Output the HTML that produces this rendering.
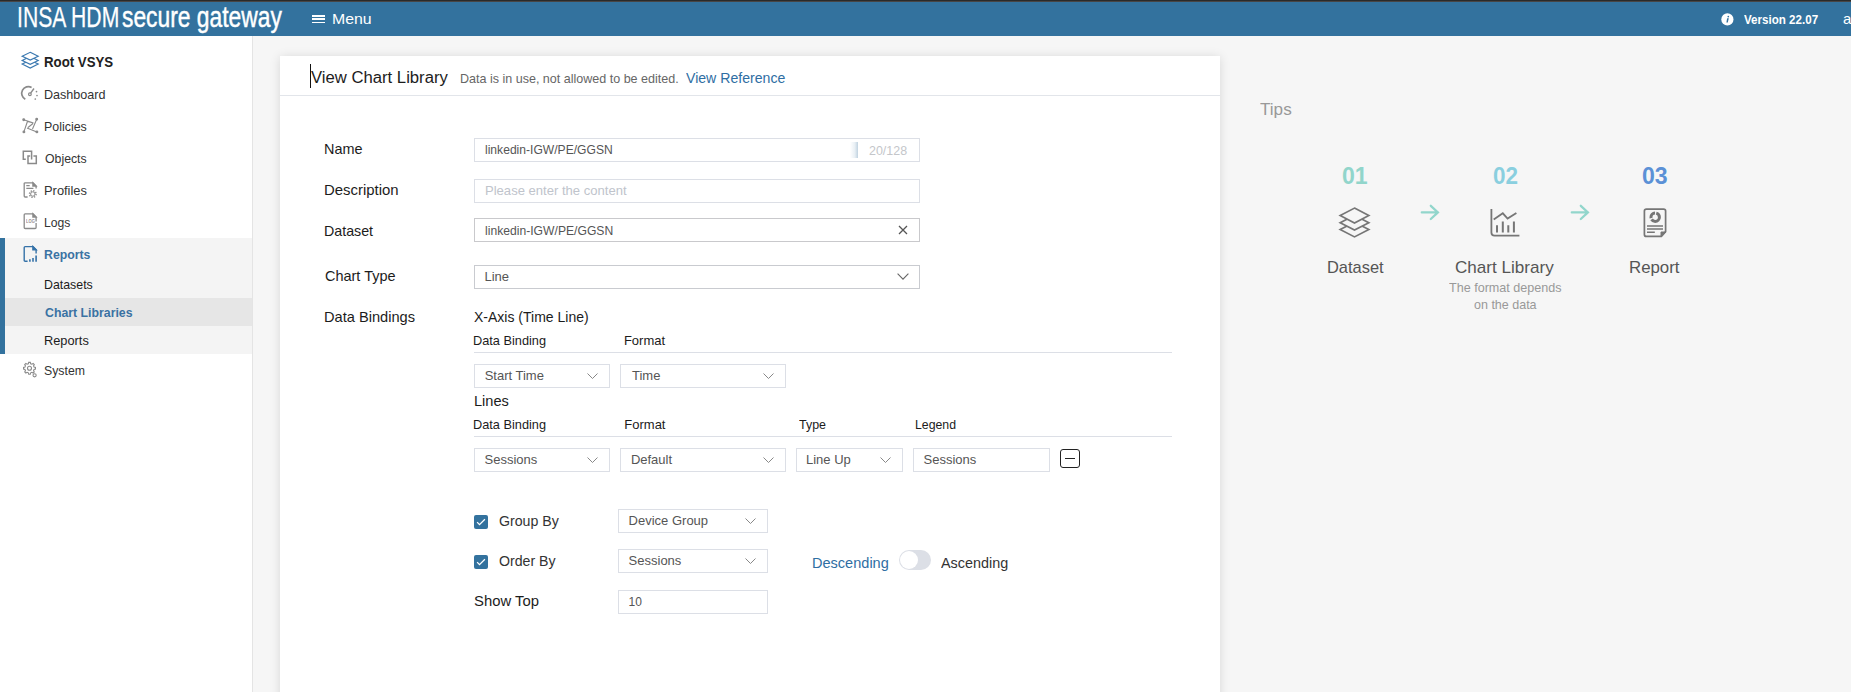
<!DOCTYPE html>
<html><head><meta charset="utf-8"><style>
*{margin:0;padding:0;box-sizing:border-box}
html,body{width:1851px;height:692px;overflow:hidden;background:#f6f6f6;font-family:"Liberation Sans",sans-serif;color:#222}
.a{position:absolute}
.t{position:absolute;white-space:nowrap;line-height:1;transform-origin:0 0}
.ib{position:absolute;border:1px solid #dcdfe6;background:#fff}
.hr{position:absolute;height:1px;background:#dcdfe6}
svg{position:absolute;overflow:visible}
</style></head><body>
<!-- top bar -->
<div class="a" style="left:0;top:0;width:1851px;height:36px;background:#33729e"></div>
<div class="a" style="left:0;top:0;width:1851px;height:1px;background:#2a2a2a"></div><div class="a" style="left:0;top:1px;width:1851px;height:1px;background:#474545"></div>
<!-- hamburger -->
<div class="a" style="left:312px;top:15px;width:13px;height:1.6px;background:#fff"></div>
<div class="a" style="left:312px;top:18.3px;width:13px;height:1.6px;background:#fff"></div>
<div class="a" style="left:312px;top:21.6px;width:13px;height:1.6px;background:#fff"></div>
<!-- info icon -->
<svg style="left:1720px;top:13px" width="15" height="14" viewBox="0 0 15 14"><circle cx="7.4" cy="6.4" r="6.1" fill="#fff"/><circle cx="8.3" cy="3.6" r="0.85" fill="#33729e"/><path d="M7.1 5.3 H8.8 L7.8 9.6 H6.4 Z" fill="#33729e"/></svg>

<!-- sidebar -->
<div class="a" style="left:0;top:36px;width:253px;height:656px;background:#fff;border-right:1px solid #e4e4e4"></div>
<div class="a" style="left:0;top:238px;width:252px;height:116px;background:#f4f4f4"></div>
<div class="a" style="left:0;top:298px;width:252px;height:28px;background:#e6e6e6"></div>
<div class="a" style="left:0;top:238px;width:5px;height:116px;background:#33729e"></div>

<!-- sidebar icons -->
<svg style="left:22px;top:51px" width="17" height="18" viewBox="0 0 17 18" stroke="#3a78b0" stroke-width="1.15" stroke-linejoin="miter">
<path d="M8.2 9.2 L16.2 13.1 L8.2 17 L0.2 13.1 Z" fill="#fff"/><path d="M8.2 5.5 L16.2 9.4 L8.2 13.3 L0.2 9.4 Z" fill="#fff"/><path d="M8.2 1.3 L16.2 5.2 L8.2 9.1 L0.2 5.2 Z" fill="#fff"/></svg>
<svg style="left:22px;top:86px" width="17" height="15" viewBox="0 0 17 15" fill="none" stroke="#8a8a8a" stroke-width="1.7">
<path d="M3.3 13.3 A6.6 6.6 0 0 1 9.6 1.4"/><path d="M8.6 7.1 L12 2.5" stroke-width="1.4"/><circle cx="7.9" cy="8.3" r="1.35" stroke-width="1.2"/><circle cx="14.5" cy="5.6" r="0.85" fill="#8a8a8a" stroke="none"/><circle cx="15" cy="9.5" r="0.85" fill="#8a8a8a" stroke="none"/><circle cx="13.3" cy="13" r="0.85" fill="#8a8a8a" stroke="none"/></svg>
<svg style="left:22px;top:117px" width="17" height="17" viewBox="0 0 17 17" fill="none" stroke="#8a8a8a" stroke-width="1.1">
<path d="M1.7 2.7 L11.5 6 M14.7 2.2 L10.5 12 M14.9 14.9 L5 11 M1.9 14.9 L5.5 4.3 M6 10.5 L11 6.5 M5.5 4.5 L11.5 6"/><circle cx="1.7" cy="2.7" r="0.9" fill="#8a8a8a"/><circle cx="14.7" cy="2.2" r="0.9" fill="#8a8a8a"/><circle cx="1.9" cy="14.9" r="0.9" fill="#8a8a8a"/><circle cx="14.9" cy="14.9" r="0.9" fill="#8a8a8a"/></svg>
<svg style="left:22px;top:150px" width="16" height="15" viewBox="0 0 16 15" fill="none" stroke="#8a8a8a" stroke-width="1.5">
<path d="M3.8 9.3 H1.3 V1.3 H9.6 V9.6"/><path d="M11.4 6 H14.3 V13.6 H6 V6 H8.2"/></svg>
<svg style="left:23px;top:182px" width="15" height="17" viewBox="0 0 15 17" fill="none" stroke="#8a8a8a" stroke-width="1.3">
<path d="M4.6 15 H2.2 Q1.2 15 1.2 14 V1.6 Q1.2 0.8 2.2 0.8 H9.9 L13.1 4 V6.4"/><path d="M9.9 0.8 L13.1 4 H9.9 Z" fill="#8a8a8a"/><path d="M3.3 3.6 H6.7 M3.3 6.4 H10.4"/><circle cx="9.8" cy="12" r="3.3" stroke-width="1.4" stroke-dasharray="1.3 1.29"/><circle cx="9.8" cy="12" r="2.2" stroke-width="1"/></svg>
<svg style="left:23px;top:213px" width="15" height="17" viewBox="0 0 15 17" fill="none" stroke="#8a8a8a" stroke-width="1.3">
<path d="M13.1 8.4 V4 L9.9 0.8 H2.2 Q1.2 0.8 1.2 1.8 V14.6 Q1.2 15.5 2.2 15.5 H12.1 Q13.1 15.5 13.1 14.6 V10"/><path d="M9.9 0.8 L13.1 4 H9.9 Z" fill="#8a8a8a"/></svg>
<div class="t" style="left:25.9px;top:219.4px;font-size:5px;color:#9a8f8f;font-weight:700;transform:scaleX(0.82)">LOG</div>
<svg style="left:23px;top:246px" width="15" height="17" viewBox="0 0 15 17" fill="none" stroke="#3572a8" stroke-width="1.4">
<path d="M4.6 15.2 H2.2 Q1.2 15.2 1.2 14.2 V1.4 Q1.2 0.6 2.2 0.6 H9.9 L13.1 3.8 V7.4"/><path d="M9.9 0.6 L13.1 3.8 H9.9 Z" fill="#3572a8"/><path d="M6.9 15.8 V13.2 M10 15.8 V12 M13.1 15.8 V9.6" stroke-width="1.6"/></svg>
<svg style="left:22px;top:361px" width="17" height="17" viewBox="0 0 17 17" fill="none" stroke="#8a8a8a" stroke-width="1.1"><path d="M6.33 2.75 L6.70 1.35 L8.30 1.35 L8.67 2.75 L9.89 3.25 L11.14 2.53 L12.27 3.66 L11.55 4.91 L12.05 6.13 L13.45 6.50 L13.45 8.10 L12.05 8.47 L11.55 9.69 L12.27 10.94 L11.14 12.07 L9.89 11.35 L8.67 11.85 L8.30 13.25 L6.70 13.25 L6.33 11.85 L5.11 11.35 L3.86 12.07 L2.73 10.94 L3.45 9.69 L2.95 8.47 L1.55 8.10 L1.55 6.50 L2.95 6.13 L3.45 4.91 L2.73 3.66 L3.86 2.53 L5.11 3.25 Z"/><circle cx="7.5" cy="7.3" r="2"/><circle cx="12.6" cy="14.3" r="1.6"/></svg>

<!-- card -->
<div class="a" style="left:280px;top:56px;width:940px;height:700px;background:#fff;box-shadow:0 1px 10px rgba(0,0,0,.13)"></div>
<div class="hr" style="left:280px;top:95px;width:940px;background:#e2e5ea"></div>
<div class="a" style="left:310px;top:64px;width:1px;height:24px;background:#111"></div>

<!-- inputs -->
<div class="ib" style="left:474px;top:138px;width:446px;height:24px"></div>
<div class="a" style="left:850px;top:142px;width:8px;height:16px;background:linear-gradient(to right,rgba(190,210,225,0),rgba(190,210,225,.35) 60%,rgba(185,205,220,.9))"></div>
<div class="ib" style="left:474px;top:179px;width:446px;height:24px"></div>
<div class="ib" style="left:474px;top:218px;width:446px;height:24px;border-color:#c9c9cc"></div>
<svg style="left:898px;top:225px" width="10" height="10" viewBox="0 0 10 10" stroke="#555" stroke-width="1.3"><path d="M1 1 L9 9 M9 1 L1 9"/></svg>
<div class="ib" style="left:474px;top:265px;width:446px;height:24px;border-color:#c9cbd0"></div>
<svg style="left:897px;top:273px" width="12" height="7" viewBox="0 0 12 7" fill="none" stroke="#666" stroke-width="1.1"><path d="M0.6 0.6 L6 6.2 L11.4 0.6"/></svg>

<div class="hr" style="left:474px;top:352px;width:698px"></div>
<div class="ib" style="left:474px;top:364px;width:136px;height:24px"></div>
<svg style="left:587.0px;top:372.7px" width="11" height="6" viewBox="0 0 11 6" fill="none" stroke="#888" stroke-width="1"><path d="M0.5 0.5 L5.5 5.5 L10.5 0.5"/></svg>
<div class="ib" style="left:620px;top:364px;width:166px;height:24px"></div>
<svg style="left:763.0px;top:372.7px" width="11" height="6" viewBox="0 0 11 6" fill="none" stroke="#888" stroke-width="1"><path d="M0.5 0.5 L5.5 5.5 L10.5 0.5"/></svg>

<div class="hr" style="left:474px;top:436px;width:698px"></div>
<div class="ib" style="left:474px;top:448px;width:136px;height:24px"></div>
<svg style="left:587.0px;top:456.7px" width="11" height="6" viewBox="0 0 11 6" fill="none" stroke="#888" stroke-width="1"><path d="M0.5 0.5 L5.5 5.5 L10.5 0.5"/></svg>
<div class="ib" style="left:620px;top:448px;width:166px;height:24px"></div>
<svg style="left:763.0px;top:456.7px" width="11" height="6" viewBox="0 0 11 6" fill="none" stroke="#888" stroke-width="1"><path d="M0.5 0.5 L5.5 5.5 L10.5 0.5"/></svg>
<div class="ib" style="left:796px;top:448px;width:107px;height:24px"></div>
<svg style="left:880.0px;top:456.7px" width="11" height="6" viewBox="0 0 11 6" fill="none" stroke="#888" stroke-width="1"><path d="M0.5 0.5 L5.5 5.5 L10.5 0.5"/></svg>
<div class="ib" style="left:913px;top:448px;width:137px;height:24px"></div>
<div class="a" style="left:1060px;top:449px;width:20px;height:19px;border:1.3px solid #222;border-radius:3px"></div>
<div class="a" style="left:1064.5px;top:458px;width:10.5px;height:1.2px;background:#222"></div>

<!-- group / order -->
<div class="a" style="left:474px;top:515px;width:14px;height:14px;background:#33729e;border-radius:2px"></div>
<svg style="left:474px;top:515px" width="14" height="14" viewBox="0 0 14 14" fill="none" stroke="#fff" stroke-width="1.3"><path d="M3.1 7.1 L5.5 9.6 L10.9 4.2"/></svg>
<div class="ib" style="left:618px;top:509px;width:150px;height:24px"></div>
<svg style="left:745.0px;top:517.7px" width="11" height="6" viewBox="0 0 11 6" fill="none" stroke="#888" stroke-width="1"><path d="M0.5 0.5 L5.5 5.5 L10.5 0.5"/></svg>
<div class="a" style="left:474px;top:555px;width:14px;height:14px;background:#33729e;border-radius:2px"></div>
<svg style="left:474px;top:555px" width="14" height="14" viewBox="0 0 14 14" fill="none" stroke="#fff" stroke-width="1.3"><path d="M3.1 7.1 L5.5 9.6 L10.9 4.2"/></svg>
<div class="ib" style="left:618px;top:549px;width:150px;height:24px"></div>
<svg style="left:745.0px;top:557.7px" width="11" height="6" viewBox="0 0 11 6" fill="none" stroke="#888" stroke-width="1"><path d="M0.5 0.5 L5.5 5.5 L10.5 0.5"/></svg>
<div class="a" style="left:899px;top:550px;width:32px;height:20px;border-radius:10px;background:#dcdfe6"></div>
<div class="a" style="left:900px;top:551px;width:18px;height:18px;border-radius:9px;background:#fff"></div>
<div class="ib" style="left:618px;top:590px;width:150px;height:24px"></div>

<!-- tips icons -->
<svg style="left:1339px;top:207px" width="32" height="32" viewBox="0 0 32 32" stroke="#767676" stroke-width="1.7" stroke-linejoin="miter">
<path d="M15.5 15.3 L29.8 22.5 L15.5 29.9 L1.2 22.5 Z" fill="#f6f6f6"/><path d="M15.5 8.3 L29.8 15.8 L15.5 23.1 L1.2 15.8 Z" fill="#f6f6f6"/><path d="M15.5 1.1 L29.8 8.6 L15.5 16 L1.2 8.6 Z" fill="#f6f6f6"/></svg>
<svg style="left:1489px;top:208px" width="32" height="30" viewBox="0 0 32 30" fill="none" stroke="#767676" stroke-width="1.8">
<path d="M2.4 1 V24.4 Q2.4 27.6 5.6 27.6 H30.4"/><path d="M4.7 11.4 L13.8 5.3 L18.6 10.6 L27.4 5"/><path d="M8 24.6 V17.3 M13.8 24.6 V13.4 M19.3 24.6 V17.3 M24.9 24.6 V13.4" stroke-width="2"/></svg>
<svg style="left:1643px;top:208px" width="24" height="30" viewBox="0 0 24 30" fill="none" stroke="#767676" stroke-width="1.7">
<path d="M3.4 1.1 H20.6 Q22.6 1.1 22.6 3.1 V23.6 L18.4 28.4 H3.4 Q1.4 28.4 1.4 26.4 V3.1 Q1.4 1.1 3.4 1.1 Z"/><path d="M18 28.7 V24 H22.9 Z" fill="#767676" stroke-width="1"/><circle cx="12.2" cy="9.2" r="4.2" stroke-width="3" stroke-dasharray="10.6 1.3 7.2 1.3 6.1 0"/><path d="M4 18 H20 M4 21 H20 M4 24.2 H11.8" stroke-width="1.6"/></svg>
<svg style="left:1420px;top:204px" width="20" height="17" viewBox="0 0 20 17" fill="none" stroke="#92d6cc" stroke-width="2.3" stroke-linecap="round"><path d="M1.8 8.4 H18 M10.8 1.8 L17.9 8.4 L10.8 15"/></svg>
<svg style="left:1570px;top:204px" width="20" height="17" viewBox="0 0 20 17" fill="none" stroke="#92d6cc" stroke-width="2.3" stroke-linecap="round"><path d="M1.8 8.4 H18 M10.8 1.8 L17.9 8.4 L10.8 15"/></svg>

<div class="t" style="left:17.14px;top:3.00px;font-size:29px;color:#fff;transform:scaleX(0.7294);-webkit-text-stroke:0.25px #fff">INSA HDM</div>
<div class="t" style="left:121.81px;top:3.00px;font-size:29px;color:#fff;transform:scaleX(0.7871);-webkit-text-stroke:0.45px #fff">secure gateway</div>
<div class="t" style="left:331.94px;top:10.50px;font-size:15px;color:#fff;transform:scaleX(1.0556)">Menu</div>
<div class="t" style="left:1743.50px;top:13.00px;font-size:13px;color:#fff;font-weight:700;transform:scaleX(0.8916)">Version 22.07</div>
<div class="t" style="left:1843.00px;top:11.00px;font-size:15px;color:#fff">a</div>
<div class="t" style="left:44.12px;top:54.00px;font-size:15px;color:#222;font-weight:700;transform:scaleX(0.8831)">Root VSYS</div>
<div class="t" style="left:44.03px;top:87.80px;font-size:13px;color:#333;transform:scaleX(0.9677)">Dashboard</div>
<div class="t" style="left:44.05px;top:119.80px;font-size:13px;color:#333;transform:scaleX(0.9545)">Policies</div>
<div class="t" style="left:45.00px;top:151.80px;font-size:13px;color:#333;transform:scaleX(0.9455)">Objects</div>
<div class="t" style="left:44.01px;top:183.90px;font-size:13px;color:#333;transform:scaleX(0.9905)">Profiles</div>
<div class="t" style="left:44.07px;top:216.00px;font-size:13px;color:#333;transform:scaleX(0.9333)">Logs</div>
<div class="t" style="left:44.05px;top:248.30px;font-size:13px;color:#3a72a3;font-weight:700;transform:scaleX(0.9458)">Reports</div>
<div class="t" style="left:44.05px;top:278.40px;font-size:13px;color:#1c1c1c;transform:scaleX(0.9500)">Datasets</div>
<div class="t" style="left:45.00px;top:306.10px;font-size:13px;color:#3a72a3;font-weight:700;transform:scaleX(0.9467)">Chart Libraries</div>
<div class="t" style="left:44.02px;top:333.80px;font-size:13px;color:#1c1c1c;transform:scaleX(0.9841)">Reports</div>
<div class="t" style="left:44.05px;top:364.10px;font-size:13px;color:#333;transform:scaleX(0.9452)">System</div>
<div class="t" style="left:310.50px;top:69.80px;font-size:16px;color:#1c1c1c;transform:scaleX(1.0420)">View Chart Library</div>
<div class="t" style="left:459.84px;top:71.80px;font-size:13px;color:#666;transform:scaleX(0.9636)">Data is in use, not allowed to be edited.</div>
<div class="t" style="left:686.00px;top:69.80px;font-size:15px;color:#2f6ea3;transform:scaleX(0.9400)">View Reference</div>
<div class="t" style="left:324.24px;top:140.90px;font-size:15px;color:#1c1c1c;transform:scaleX(0.9615)">Name</div>
<div class="t" style="left:324.01px;top:182.20px;font-size:15px;color:#1c1c1c;transform:scaleX(0.9932)">Description</div>
<div class="t" style="left:324.05px;top:223.20px;font-size:15px;color:#1c1c1c;transform:scaleX(0.9490)">Dataset</div>
<div class="t" style="left:324.50px;top:268.00px;font-size:15px;color:#1c1c1c;transform:scaleX(0.9644)">Chart Type</div>
<div class="t" style="left:323.52px;top:309.00px;font-size:15px;color:#1c1c1c;transform:scaleX(0.9750)">Data Bindings</div>
<div class="t" style="left:474.40px;top:309.20px;font-size:15px;color:#1c1c1c;transform:scaleX(0.9336)">X-Axis (Time Line)</div>
<div class="t" style="left:473.42px;top:333.50px;font-size:13px;color:#1c1c1c;transform:scaleX(0.9808)">Data Binding</div>
<div class="t" style="left:623.90px;top:333.50px;font-size:13px;color:#1c1c1c">Format</div>
<div class="t" style="left:473.53px;top:393.20px;font-size:15px;color:#1c1c1c;transform:scaleX(0.9714)">Lines</div>
<div class="t" style="left:473.42px;top:418.30px;font-size:13px;color:#1c1c1c;transform:scaleX(0.9808)">Data Binding</div>
<div class="t" style="left:624.30px;top:418.20px;font-size:13px;color:#1c1c1c">Format</div>
<div class="t" style="left:799.20px;top:418.10px;font-size:13px;color:#1c1c1c;transform:scaleX(0.9571)">Type</div>
<div class="t" style="left:914.75px;top:418.10px;font-size:13px;color:#1c1c1c;transform:scaleX(0.9452)">Legend</div>
<div class="t" style="left:498.50px;top:513.00px;font-size:15px;color:#333;transform:scaleX(0.9444)">Group By</div>
<div class="t" style="left:498.50px;top:553.00px;font-size:15px;color:#333;transform:scaleX(0.9433)">Order By</div>
<div class="t" style="left:473.51px;top:593.30px;font-size:15px;color:#1c1c1c;transform:scaleX(0.9891)">Show Top</div>
<div class="t" style="left:812.43px;top:554.80px;font-size:15px;color:#2f6ea3;transform:scaleX(0.9692)">Descending</div>
<div class="t" style="left:940.80px;top:554.80px;font-size:15px;color:#333;transform:scaleX(0.9586)">Ascending</div>
<div class="t" style="left:484.59px;top:143.80px;font-size:12px;color:#555;transform:scaleX(1.0080)">linkedin-IGW/PE/GGSN</div>
<div class="t" style="left:869.00px;top:145.00px;font-size:12px;color:#c4c6ca;transform:scaleX(1.0378)">20/128</div>
<div class="t" style="left:484.70px;top:183.70px;font-size:13px;color:#c0c4cc;transform:scaleX(1.0043)">Please enter the content</div>
<div class="t" style="left:484.69px;top:224.70px;font-size:12px;color:#555;transform:scaleX(1.0120)">linkedin-IGW/PE/GGSN</div>
<div class="t" style="left:484.50px;top:270.00px;font-size:13px;color:#555">Line</div>
<div class="t" style="left:484.70px;top:369.00px;font-size:13px;color:#555">Start Time</div>
<div class="t" style="left:632.00px;top:369.00px;font-size:13px;color:#555">Time</div>
<div class="t" style="left:484.50px;top:453.10px;font-size:13px;color:#555">Sessions</div>
<div class="t" style="left:630.90px;top:453.10px;font-size:13px;color:#555">Default</div>
<div class="t" style="left:806.00px;top:453.10px;font-size:13px;color:#555">Line Up</div>
<div class="t" style="left:923.50px;top:453.10px;font-size:13px;color:#555">Sessions</div>
<div class="t" style="left:628.60px;top:514.00px;font-size:13px;color:#555">Device Group</div>
<div class="t" style="left:628.60px;top:554.00px;font-size:13px;color:#555">Sessions</div>
<div class="t" style="left:628.60px;top:596.00px;font-size:12px;color:#555">10</div>
<div class="t" style="left:1260.40px;top:100.70px;font-size:17px;color:#999;transform:scaleX(1.0065)">Tips</div>
<div class="t" style="left:1342.24px;top:163.90px;font-size:24px;color:#91d5cb;font-weight:700;transform:scaleX(0.9600)">01</div>
<div class="t" style="left:1492.76px;top:163.90px;font-size:24px;color:#8acfdf;font-weight:700;transform:scaleX(0.9360)">02</div>
<div class="t" style="left:1642.04px;top:163.90px;font-size:24px;color:#5b91d6;font-weight:700;transform:scaleX(0.9600)">03</div>
<div class="t" style="left:1326.53px;top:259.30px;font-size:17px;color:#555;transform:scaleX(0.9655)">Dataset</div>
<div class="t" style="left:1455.44px;top:259.30px;font-size:17px;color:#555;transform:scaleX(1.0052)">Chart Library</div>
<div class="t" style="left:1629.26px;top:259.30px;font-size:17px;color:#555;transform:scaleX(0.9900)">Report</div>
<div class="t" style="left:1449.25px;top:281.40px;font-size:13px;color:#999;transform:scaleX(0.9681)">The format depends</div>
<div class="t" style="left:1473.85px;top:298.40px;font-size:13px;color:#999;transform:scaleX(0.9615)">on the data</div>
</body></html>
